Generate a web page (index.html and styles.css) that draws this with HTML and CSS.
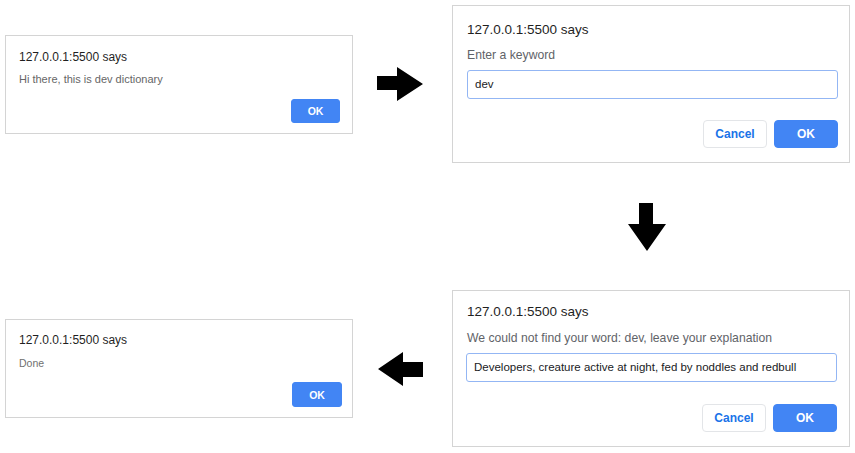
FILE: index.html
```html
<!DOCTYPE html>
<html lang="en">
<head>
<meta charset="utf-8">
<title>Dev dictionary dialogs</title>
<link rel="stylesheet" href="styles.css">
</head>
<body>
<main class="board">
  <section class="dialog dialog--small cell-a">
    <h2 class="dialog__title">127.0.0.1:5500 says</h2>
    <p class="dialog__msg">Hi there, this is dev dictionary</p>
    <div class="dialog__actions">
      <button class="btn btn--ok">OK</button>
    </div>
  </section>

  <div class="arrow arrow--right cell-b">
    <svg width="46" height="34" viewBox="0 0 46 34"><polygon points="0,9 20,9 20,0 46,17 20,34 20,23 0,23" fill="#000"/></svg>
  </div>

  <section class="dialog dialog--large cell-c">
    <h2 class="dialog__title">127.0.0.1:5500 says</h2>
    <p class="dialog__msg">Enter a keyword</p>
    <div class="dialog__input">dev</div>
    <div class="dialog__actions">
      <button class="btn btn--cancel">Cancel</button>
      <button class="btn btn--ok">OK</button>
    </div>
  </section>

  <div class="arrow arrow--down cell-d">
    <svg width="38" height="48" viewBox="0 0 38 48"><polygon points="11,0 25,0 25,21 38,21 19,48 0,21 11,21" fill="#000"/></svg>
  </div>

  <section class="dialog dialog--small dialog--done cell-e">
    <h2 class="dialog__title">127.0.0.1:5500 says</h2>
    <p class="dialog__msg">Done</p>
    <div class="dialog__actions">
      <button class="btn btn--ok">OK</button>
    </div>
  </section>

  <div class="arrow arrow--left cell-f">
    <svg width="45" height="34" viewBox="0 0 45 34"><polygon points="0,17 25,0 25,10 45,10 45,25 25,25 25,34" fill="#000"/></svg>
  </div>

  <section class="dialog dialog--large dialog--tight cell-g">
    <h2 class="dialog__title">127.0.0.1:5500 says</h2>
    <p class="dialog__msg">We could not find your word: dev, leave your explanation</p>
    <div class="dialog__input">Developers, creature active at night, fed by noddles and redbull</div>
    <div class="dialog__actions">
      <button class="btn btn--cancel">Cancel</button>
      <button class="btn btn--ok">OK</button>
    </div>
  </section>
</main>
</body>
</html>
```

FILE: styles.css
```css
* { box-sizing: border-box; }

html, body {
  margin: 0;
  background: #ffffff;
}

body {
  font-family: "Liberation Sans", Arial, Helvetica, sans-serif;
  color: #202124;
}

.board {
  display: grid;
  grid-template-columns: 348px 99px 398px;
  grid-template-rows: 158px 127px 157px;
  padding: 5px 0 0 5px;
}

.cell-a { grid-column: 1; grid-row: 1; align-self: center; }
.cell-b { grid-column: 2; grid-row: 1; align-self: center; margin-left: 24px; }
.cell-c { grid-column: 3; grid-row: 1; }
.cell-d { grid-column: 3; grid-row: 2; align-self: center; margin-left: 176px; }
.cell-e { grid-column: 1; grid-row: 3; align-self: center; }
.cell-f { grid-column: 2; grid-row: 3; align-self: center; margin-left: 25px; }
.cell-g { grid-column: 3; grid-row: 3; }

.arrow { display: flex; }
.arrow svg { display: block; }

.dialog {
  background: #ffffff;
  border: 1px solid #d4d4d4;
  display: flex;
  flex-direction: column;
}

.dialog__title {
  margin: 0;
  font-weight: normal;
  color: #1f1f1f;
  white-space: nowrap;
}

.dialog__msg {
  margin: 0;
  color: #5f6368;
  white-space: nowrap;
}

.dialog__actions {
  display: flex;
  justify-content: flex-end;
  gap: 7px;
}

.btn {
  font-family: "Liberation Sans", Arial, Helvetica, sans-serif;
  font-weight: bold;
  border-radius: 4px;
  padding: 0;
  cursor: pointer;
}

.btn--ok {
  background: #4285f4;
  border: 1px solid #4285f4;
  color: #ffffff;
}

.btn--cancel {
  background: #ffffff;
  border: 1px solid #e3e5e8;
  color: #1a73e8;
}

/* small alert */
.dialog--small {
  height: 99px;
  padding: 14px 12px 0 13px;
}
.dialog--small .dialog__title {
  font-size: 12px;
  line-height: 14px;
}
.dialog--small .dialog__msg {
  font-size: 11px;
  line-height: 14px;
  margin-top: 8px;
  color: #666666;
}
.dialog--small .dialog__actions {
  margin-top: 13px;
}
.dialog--small .btn {
  width: 49px;
  height: 24px;
  font-size: 10.5px;
  border-radius: 3px;
}

.dialog--done {
  padding-top: 13px;
  padding-right: 10px;
}
.dialog--done .dialog__msg {
  margin-top: 9px;
  font-size: 10.5px;
  color: #707070;
}
.dialog--done .dialog__actions {
  margin-top: 12px;
}
.dialog--done .btn {
  width: 50px;
  height: 25px;
}

/* prompt */
.dialog--large {
  height: 158px;
  padding: 16px 11px 0 14px;
}
.dialog--large .dialog__title {
  font-size: 13.5px;
  line-height: 16px;
}
.dialog--large .dialog__msg {
  font-size: 12.2px;
  line-height: 16px;
  margin-top: 9px;
}
.dialog__input {
  margin-top: 7px;
  height: 29px;
  border: 1.5px solid #93b6f4;
  border-radius: 3px;
  padding: 0 7px;
  font-size: 11.5px;
  line-height: 26px;
  color: #202124;
  white-space: nowrap;
}
.dialog--large .dialog__actions {
  margin-top: 21px;
}
.dialog--large .btn {
  width: 64px;
  height: 28px;
  font-size: 12px;
}

.dialog--tight {
  height: 157px;
  padding-top: 13px;
  padding-right: 12px;
  padding-left: 13px;
}
.dialog--tight .dialog__title { padding-left: 1px; }
.dialog--tight .dialog__msg { margin-top: 10px; padding-left: 1px; }
.dialog--tight .dialog__actions { margin-top: 22px; }
```
